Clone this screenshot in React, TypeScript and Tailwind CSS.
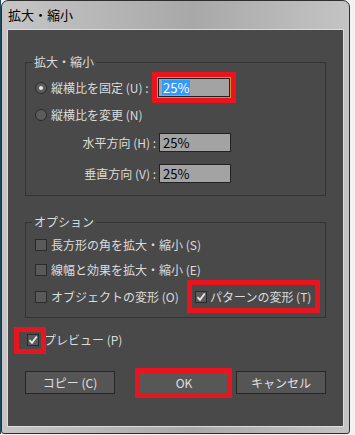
import React from "react";

const font = "font-['Noto_Sans_CJK_JP','Noto_Sans',sans-serif]";

function Radio({ checked }: { checked?: boolean }) {
  return (
    <span className="w-[12px] h-[12px] rounded-full border border-[#2a2a2a] bg-[#5c5c5c] flex items-center justify-center shrink-0">
      {checked && <span className="w-[4px] h-[4px] rounded-full bg-[#e6e6e6]" />}
    </span>
  );
}

function Check({ checked }: { checked?: boolean }) {
  return (
    <span className="w-[12px] h-[12px] border border-[#2a2a2a] bg-[#5a5a5a] flex items-center justify-center shrink-0">
      {checked && (
        <svg width="10" height="10" viewBox="0 0 10 10">
          <path d="M1.5 5.2 L4 7.8 L8.8 1.5" fill="none" stroke="#e8e8e8" strokeWidth="1.8" />
        </svg>
      )}
    </span>
  );
}

function Field({ value }: { value: string }) {
  return (
    <div className="w-[72px] h-[19px] border border-[#222] bg-[#a3a3a3] flex items-center pl-[3px] text-[13px] text-black leading-none">
      {value}
    </div>
  );
}

export default function App() {
  return (
    <div className={`w-[355px] h-[435px] bg-[#f2f2f2] flex ${font}`}>
      <div className="w-[1px] h-[434px] bg-[#20495f]" />
      <div className="w-[349px] h-[434px] rounded-t-[7px] rounded-b-[3px] border border-[#2e2e2e] bg-linear-to-r from-[#c6c6c6] via-[#a8a8a8] via-55% to-[#c4c4c4] flex flex-col px-[5px] pb-[6px]">
        <div className="h-[28px] flex items-center pl-[1px] text-[13px] text-black">拡大・縮小</div>
        <div className="flex-1 border border-[#dcdcdc] bg-[#494949] flex flex-col text-[12px] text-[#dcdcdc]">
          {/* 拡大・縮小 group */}
          <div className="relative ml-[17px] mt-[32px] w-[301px] h-[134px] border border-[#333] pt-[9px] pl-[9px]">
            <span className="absolute -top-[9px] left-[6px] px-[2px] bg-[#494949] leading-[16px]">拡大・縮小</span>
            <div className="flex items-center h-[31px]">
              <Radio checked />
              <span className="ml-[4px] w-[101px]">縦横比を固定 (U) :</span>
              <div className="w-[84px] h-[31px] border-[5px] border-[#e8151f] flex">
                <div className="flex-1 border border-[#e08a2a] flex">
                  <div className="flex-1 border border-[#222] bg-[#a3a3a3] flex items-center pl-[3px]">
                    <span className="bg-[#3399ff] text-white text-[13px] leading-[15px] px-[1px]">25%</span>
                  </div>
                </div>
              </div>
            </div>
            <div className="flex items-center h-[20px] mt-[2px]">
              <Radio />
              <span className="ml-[4px]">縦横比を変更 (N)</span>
            </div>
            <div className="flex items-center h-[19px] mt-[8px]">
              <span className="w-[121px] text-right">水平方向 (H) :</span>
              <div className="ml-[3px]"><Field value="25%" /></div>
            </div>
            <div className="flex items-center h-[19px] mt-[12px]">
              <span className="w-[121px] text-right">垂直方向 (V) :</span>
              <div className="ml-[3px]"><Field value="25%" /></div>
            </div>
          </div>

          {/* オプション group */}
          <div className="relative ml-[17px] mt-[26px] w-[301px] h-[96px] border border-[#333] pt-[12px] pl-[9px]">
            <span className="absolute -top-[9px] left-[6px] px-[2px] bg-[#494949] leading-[16px]">オプション</span>
            <div className="flex items-center h-[20px]">
              <Check />
              <span className="ml-[4px]">長方形の角を拡大・縮小 (S)</span>
            </div>
            <div className="flex items-center h-[20px] mt-[5px]">
              <Check />
              <span className="ml-[4px]">線幅と効果を拡大・縮小 (E)</span>
            </div>
            <div className="flex items-center h-[33px]">
              <Check />
              <span className="ml-[4px] w-[136px]">オブジェクトの変形 (O)</span>
              <div className="w-[133px] h-[33px] border-[5px] border-[#e8151f] flex items-center pl-[3px]">
                <Check checked />
                <span className="ml-[3px]">パターンの変形 (T)</span>
              </div>
            </div>
          </div>

          {/* preview */}
          <div className="relative ml-[19px] mt-[12px] flex items-center h-[20px]">
            <span className="absolute -left-[13px] -top-[3px] w-[32px] h-[27px] border-[5px] border-[#e8151f]" />
            <Check checked />
            <span className="ml-[5px]">プレビュー (P)</span>
          </div>

          {/* buttons */}
          <div className="flex ml-[17px] mt-[21px]">
            <button className="w-[90px] h-[23px] border border-[#262626] bg-[#555] text-[#e0e0e0] text-[12px]">コピー (C)</button>
            <div className="relative ml-[24px]">
              <button className="w-[90px] h-[23px] border border-[#262626] bg-[#575757] text-[#e0e0e0] text-[12px]">OK</button>
              <span className="absolute -left-[4px] -top-[3px] w-[97px] h-[30px] border-[5px] border-[#e8151f]" />
            </div>
            <button className="ml-[7px] w-[90px] h-[23px] border border-[#262626] bg-[#555] text-[#e0e0e0] text-[12px]">キャンセル</button>
          </div>
        </div>
      </div>
    </div>
  );
}
